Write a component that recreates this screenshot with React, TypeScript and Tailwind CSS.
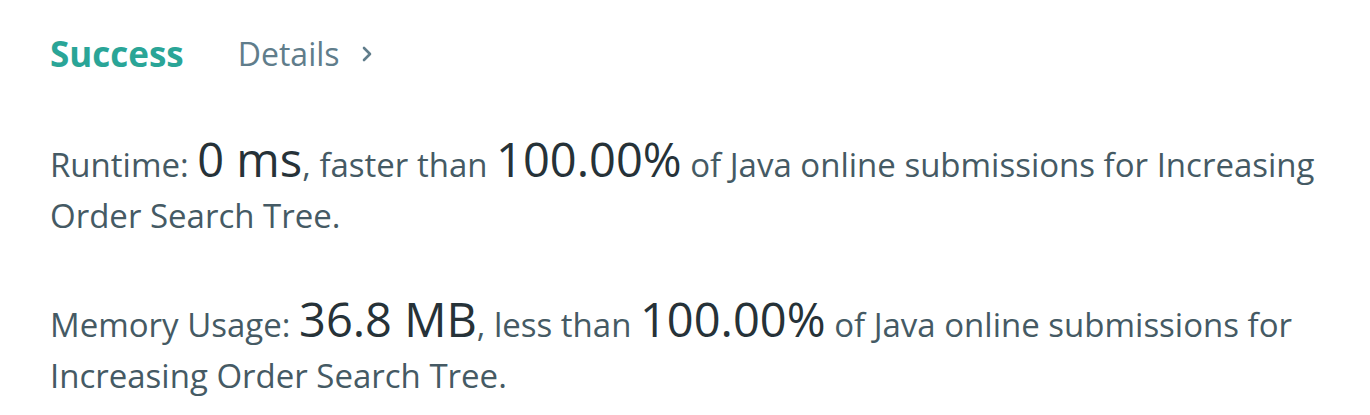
import React from "react";

const Stat = ({ children }: { children: React.ReactNode }) => (
  <span className="inline-block h-[40px] text-[47px] leading-[40px] text-[#263238]">{children}</span>
);

const App = () => {
  return (
    <div className="w-[1370px] h-[415px] bg-white pl-[50px] pr-[20px] pt-[30px] font-['Open_Sans','Noto_Sans',sans-serif] text-[33px] text-[#455a64] overflow-hidden">
      {/* Header */}
      <div className="flex items-center h-[48px] leading-[48px]">
        <span className="text-[35px] font-bold text-[#2aa597]">Success</span>
        <a className="ml-[54px] flex items-center text-[32px] text-[#607d8b]">
          Details
          <svg className="ml-[20px] w-[14px] h-[16px]" viewBox="0 0 14 16" fill="none" stroke="currentColor" strokeWidth="2.6" strokeLinecap="round" strokeLinejoin="round">
            <path d="M4 2l6 6-6 6" />
          </svg>
        </a>
      </div>

      <p className="mt-[61px] leading-[51px]">
        Runtime: <Stat>0 ms</Stat>, faster than <Stat>100.00%</Stat> of Java online submissions for Increasing Order Search Tree.
      </p>

      <p className="mt-[58px] leading-[51px]">
        Memory Usage: <Stat>36.8 MB</Stat>, less than <Stat>100.00%</Stat> of Java online submissions for Increasing Order Search Tree.
      </p>
    </div>
  );
};

export default App;
